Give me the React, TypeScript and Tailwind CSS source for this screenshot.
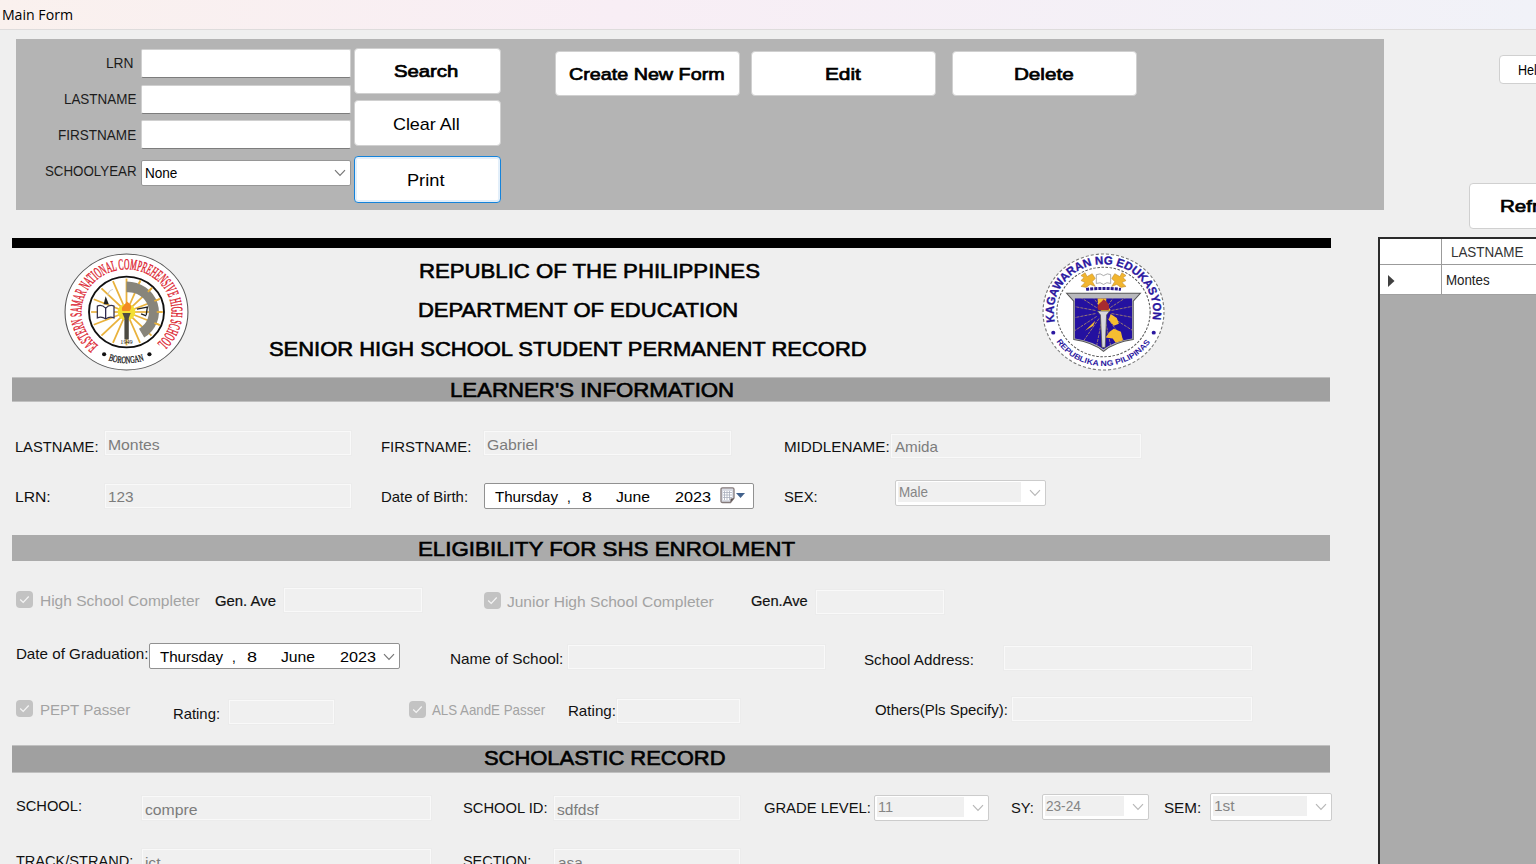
import { useLayoutEffect, useRef } from 'react';
import type { ReactNode } from 'react';

/** Text stretched or condensed horizontally to fill the width of its box. */
function Fit({ className, children }: { className: string; children: ReactNode }) {
  const box = useRef<HTMLDivElement>(null);
  const text = useRef<HTMLSpanElement>(null);
  useLayoutEffect(() => {
    if (!box.current || !text.current) return;
    const natural = text.current.offsetWidth;
    if (natural > 0) text.current.style.transform = `translateX(0.9px) scaleX(${(box.current.clientWidth - 1.4) / natural})`;
  });
  return (
    <div ref={box} className={`shrink-0 h-5 text-left text-[15px] leading-5 ${className}`}>
      <span ref={text} className="inline-block origin-left whitespace-pre">
        {children}
      </span>
    </div>
  );
}

function Field({ className, children }: { className: string; children?: ReactNode }) {
  return (
    <div className={`flex h-6 shrink-0 border border-[#f9f9f9] bg-[#f0f0f0] pl-px text-[#7c7c7c] outline outline-[#ececec] ${className}`}>
      {children}
    </div>
  );
}

function Chevron({ className }: { className: string }) {
  return (
    <svg className={`shrink-0 ${className}`} width="12" height="8" viewBox="0 0 12 8" fill="none" stroke="currentColor" strokeWidth="1.2">
      <path d="M1 1.2 6 6.4 11 1.2" />
    </svg>
  );
}

function Select({ className, children }: { className: string; children: ReactNode }) {
  return (
    <div className={`flex shrink-0 items-center rounded-[2px] border border-[#cccccc] bg-white text-[#858585] ${className}`}>
      <div className="mb-0.5 ml-0.5 mr-2 h-5 flex-1 bg-[#f0f0f0]">{children}</div>
      <Chevron className="mr-1 text-[#b8b8b8]" />
    </div>
  );
}

function Check({ className }: { className: string }) {
  return (
    <div className={`flex size-[17px] shrink-0 items-center justify-center rounded-[4px] bg-[#c3c3c3] ${className}`}>
      <svg width="11" height="9" viewBox="0 0 11 9" fill="none" stroke="#f5f5f5" strokeWidth="1.2">
        <path d="m1.2 4.5 3 3 5.5-6" />
      </svg>
    </div>
  );
}

function DatePicker({ className, children }: { className: string; children: ReactNode }) {
  return (
    <div className={`flex h-[26px] shrink-0 rounded-[2px] border border-[#919191] bg-white text-black ${className}`}>
      <Fit className="ml-[9px] mt-[3px] w-[65px]">Thursday</Fit>
      <Fit className="ml-[7px] mt-[3px] w-[5px]">,</Fit>
      <Fit className="ml-[10px] mt-[3px] w-[11px]">8</Fit>
      <Fit className="ml-[23px] mt-[3px] w-[36px]">June</Fit>
      <Fit className="ml-[23px] mt-[3px] w-[37px]">2023</Fit>
      {children}
    </div>
  );
}

function Button({ className, focused, children }: { className: string; focused?: boolean; children: ReactNode }) {
  const frame = focused
    ? 'border-[1.5px] border-[#1583da] shadow-[inset_0_0_0_2px_#e3effa]'
    : 'border border-[#d0d0d0]';
  return (
    <button className={`flex shrink-0 items-center justify-center rounded-[4px] bg-white text-black ${frame} ${className}`}>
      {children}
    </button>
  );
}

const rays = [0, 22.5, 45, 67.5, 90, 112.5, 135, 157.5, 180, 202.5, 225, 247.5, 270, 292.5, 315, 337.5];

function SchoolSeal({ className }: { className: string }) {
  return (
    <svg className={className} width="125" height="118" viewBox="-60 -60 120 120" preserveAspectRatio="none">
      <defs>
        <path id="schoolTop" d="M-27 34A43.4 43.4 0 1 1 27 34" />
        <path id="schoolBottom" d="M-17.5 49A52 52 0 0 0 17.5 49" />
      </defs>
      <circle r="59" fill="#fff" stroke="#555" strokeWidth="1" />
      <circle r="36" fill="#fff" stroke="#111" strokeWidth="1.8" />
      <g stroke="#e9b23c" strokeWidth="1.7">
        {rays.map((a) => (
          <path key={a} d="M0-8V-34" transform={`rotate(${a})`} />
        ))}
      </g>
      <path d="M0-31V-20A20 20 0 0 1 12 17L17 26A31 31 0 0 0 0-31Z" fill="#88857b" />
      <g stroke="#e9b23c" strokeWidth="1.7">
        <path d="M0-31V-35" transform="rotate(22.5)" />
        <path d="M0-29V-35" transform="rotate(45)" />
        <path d="M0-29V-35" transform="rotate(67.5)" />
        <path d="M0-29V-35" transform="rotate(90)" />
        <path d="M0-29V-35" transform="rotate(112.5)" />
      </g>
      <circle r="8.5" fill="#f3df32" />
      <path d="M-4-1C-6-7 0-7 0-11 6-7 5-4 3-1Z" fill="#f38b24" />
      <path d="M-4 1H4L2.2 6V28H-2V6Z" fill="#4c4a42" />
      <path d="M-28-6Q-24-8-20-4 -16-8-12-6V6Q-16 4-20 7 -24 4-28 6Z" fill="#fff" stroke="#332f48" strokeWidth="1.2" />
      <path d="M-20-4V7" fill="none" stroke="#272248" strokeWidth="1.2" />
      <path d="M-22-8-20-16-17-8Z" fill="#222" />
      <path d="M-18-17Q-17-22-13-23" fill="none" stroke="#ccc" />
      <path d="M10-3 20-5 19 3M14 2 19 4" fill="none" stroke="#222" strokeWidth="1.3" />
      <text fill="#dc2430" stroke="#dc2430" strokeWidth="0.45" fontFamily="Liberation Serif, serif" fontSize="15.5">
        <textPath href="#schoolTop" textLength="211" lengthAdjust="spacingAndGlyphs">
          EASTERN SAMAR NATIONAL COMPREHENSIVE HIGH SCHOOL
        </textPath>
      </text>
      <text fill="#111" stroke="#111" strokeWidth="0.3" fontFamily="Liberation Serif, serif" fontSize="10">
        <textPath href="#schoolBottom" textLength="35" lengthAdjust="spacingAndGlyphs">
          BORONGAN
        </textPath>
      </text>
      <circle cx="-21.5" cy="43" r="2" fill="#111" />
      <circle cx="22" cy="43" r="2" fill="#111" />
      <text x="-6" y="33" fill="#111" fontFamily="Liberation Serif, serif" fontSize="6" textLength="12">
        1949
      </text>
    </svg>
  );
}

function DepartmentSeal({ className }: { className: string }) {
  return (
    <svg className={className} width="123" height="118" viewBox="-60 -60 120 120" preserveAspectRatio="none">
      <defs>
        <path id="deptTop" d="M-47.3 10A48.4 48.4 0 1 1 47.3 10" />
        <path id="deptBottom" d="M-46 30A55 55 0 0 0 46 30" />
        <clipPath id="shield">
          <path d="M-28-14H28V27Q10 30 0 38Q-10 30-28 27Z" />
        </clipPath>
      </defs>
      <circle r="59" fill="#fff" stroke="#777" strokeWidth="1.1" strokeDasharray="3 2" />
      <circle r="45.5" fill="#fff" stroke="#555" strokeWidth="1" strokeDasharray="2.5 1.5" />
      <path d="M-36-19H36L29-11V28Q10 31 0 40Q-10 31-29 28V-11Z" fill="#b9b9bd" stroke="#555" strokeWidth="1" />
      <g clipPath="url(#shield)">
        <rect x="-36" y="-20" width="72" height="62" fill="#2411a0" />
        <g stroke="#b79569" strokeWidth="0.7" strokeDasharray="3 1">
          {rays.map((a) => (
            <path key={a} d="M0-8V-46" transform={`rotate(${a + 11})`} />
          ))}
        </g>
        <path d="M-6-16 2-17 3-7 7-2 2 3-5-4Z M7 2 13 6 15 12 10 14 5 8Z M10 17 17 20 19 29 13 33 9 27 2 26 6 20Z M-18 19-8 9-10 14Z" fill="#f5bd31" />
      </g>
      <path d="M-5-2C-8-8-2-9 0-13 6-9 6-5 5-2Z" fill="#a72b2f" />
      <path d="M-6-1H6L3 3 1.7 36H-1.5L-3 3Z" fill="#d8d8dc" stroke="#554" strokeWidth="0.7" />
      <path d="M-7-38Q-3-40 0-37 4-40 7-38V-29Q3-31 0-28-3-31-7-29Z" fill="#fff" stroke="#777" strokeWidth="0.6" />
      <g fill="#f1b52f" stroke="#b6852b" strokeWidth="0.5">
        <path d="M-22-37-18-40-16-36-11-39-8-34-11-31-8-26-13-28-17-25-22-26-18-30-22-32-19-35Z" />
        <path d="M22-37 18-40 16-36 11-39 8-34 11-31 8-26 13-28 17-25 22-26 18-30 22-32 19-35Z" />
      </g>
      <path d="M-17-23Q0-25 17-23" fill="none" stroke="#2b1b91" strokeWidth="3" strokeDasharray="3 1" />
      <g fill="#2b18a0" fontFamily="Liberation Sans, sans-serif" fontWeight="700">
        <text fontSize="11.5" stroke="#2b18a0" strokeWidth="0.3">
          <textPath href="#deptTop" textLength="170" lengthAdjust="spacingAndGlyphs">
            KAGAWARAN NG EDUKASYON
          </textPath>
        </text>
        <text fontSize="7.8">
          <textPath href="#deptBottom" textLength="108" lengthAdjust="spacingAndGlyphs">
            REPUBLIKA NG PILIPINAS
          </textPath>
        </text>
        <circle cx="-49" cy="21" r="2" />
        <circle cx="49" cy="21" r="2" />
      </g>
    </svg>
  );
}

const heading = 'text-[20px] text-black [-webkit-text-stroke:0.6px_#000]';
const strong = 'text-[17px] [-webkit-text-stroke:0.7px_#000]';
const searchInput = 'w-[210px] shrink-0 border border-b-[#7d7d7d] border-x-[#d0d0d0] border-t-[#d0d0d0] bg-white rounded-[2px]';

function SearchPanel() {
  return (
    <section className="ml-4 mt-[9px] flex h-[171px] w-[1368px] shrink-0 bg-[#b4b4b4] text-[#1c1c1c]">
      <div className="w-[335px] shrink-0 pt-[10px]">
        <div className="flex h-[29px]">
          <Fit className="ml-[89px] mr-[7px] mt-[4px] w-[29px]">LRN</Fit>
          <div className={searchInput} />
        </div>
        <div className="mt-[7px] flex h-[29px]">
          <Fit className="ml-[47px] mr-[4px] mt-[4px] w-[74px]">LASTNAME</Fit>
          <div className={searchInput} />
        </div>
        <div className="mt-[6px] flex h-[29px]">
          <Fit className="ml-[41px] mr-[4px] mt-[5px] w-[80px]">FIRSTNAME</Fit>
          <div className={searchInput} />
        </div>
        <div className="mt-[11px] flex h-[27px]">
          <Fit className="ml-[28px] mr-[4px] mt-px w-[93px]">SCHOOLYEAR</Fit>
          <div className="flex h-[26px] w-[210px] shrink-0 items-center justify-between rounded-[2px] border border-[#969696] bg-white">
            <Fit className="ml-[2px] w-[34px] text-black">None</Fit>
            <Chevron className="mr-1 text-[#777]" />
          </div>
        </div>
      </div>
      <div className="ml-[3px] w-[147px] shrink-0 pt-[9px]">
        <Button className="h-[46px] w-full pr-1 pt-[2px]">
          <Fit className={`w-[66px] ${strong}`}>Search</Fit>
        </Button>
        <Button className="mt-[6px] h-[46px] w-full pr-[3px] pt-[3px]">
          <Fit className="w-[68px] text-[17px]">Clear All</Fit>
        </Button>
        <Button focused className="mt-[10px] h-[47px] w-full pr-1 pt-[3px]">
          <Fit className="w-[39px] text-[17px]">Print</Fit>
        </Button>
      </div>
      <div className="ml-[54px] flex pt-[12px]">
        <Button className="h-[45px] w-[185px] pr-0.5">
          <Fit className={`mt-0.5 w-[157px] ${strong}`}>Create New Form</Fit>
        </Button>
        <Button className="ml-[11px] h-[45px] w-[185px] pr-0.5">
          <Fit className={`mt-0.5 w-[37px] ${strong}`}>Edit</Fit>
        </Button>
        <Button className="ml-[16px] h-[45px] w-[185px] pr-[3px]">
          <Fit className={`mt-0.5 w-[61px] ${strong}`}>Delete</Fit>
        </Button>
      </div>
    </section>
  );
}

function StudentRecord() {
  return (
    <main className="w-[1366px] shrink-0 pt-px text-[#111]">
      <div className="h-[10px] w-[1319px] bg-black" />
      <header className="flex h-[129px] pt-[5px]">
        <SchoolSeal className="ml-[52px] shrink-0" />
        <div className="ml-[79px] w-[600px] shrink-0 pt-[8px]">
          <Fit className={`ml-[150px] w-[343px] ${heading}`}>REPUBLIC OF THE PHILIPPINES</Fit>
          <Fit className={`ml-[149px] mt-[19px] w-[322px] ${heading}`}>DEPARTMENT OF EDUCATION</Fit>
          <Fit className={`mt-[19px] w-[599px] ${heading}`}>SENIOR HIGH SCHOOL STUDENT PERMANENT RECORD</Fit>
        </div>
        <DepartmentSeal className="ml-[174px] shrink-0" />
      </header>
      <div className="flex h-[25px] w-[1318px] border-y border-[#c0c0c0] bg-[#a0a0a0]">
        <Fit className={`ml-[437px] mt-[2px] w-[286px] ${heading}`}>LEARNER'S INFORMATION</Fit>
      </div>
      <div className="flex h-[68px] items-start">
        <Fit className="ml-[2px] mt-[35px] w-[85px]">LASTNAME:</Fit>
        <Field className="ml-[6px] mt-[29px] w-[246px]">
          <Fit className="mt-[3px] w-[53px]">Montes</Fit>
        </Field>
        <Fit className="ml-[29px] mt-[35px] w-[92px]">FIRSTNAME:</Fit>
        <Field className="ml-[12px] mt-[29px] w-[247px]">
          <Fit className="mt-[3px] w-[52px]">Gabriel</Fit>
        </Field>
        <Fit className="ml-[52px] mt-[35px] w-[107px]">MIDDLENAME:</Fit>
        <Field className="ml-px mt-[32px] w-[250px]">
          <Fit className="ml-px mt-[2px] w-[45px]">Amida</Fit>
        </Field>
      </div>
      <div className="flex h-[65px] items-start">
        <Fit className="ml-[2px] mt-[17px] w-[37px]">LRN:</Fit>
        <Field className="ml-[54px] mt-[14px] w-[246px]">
          <Fit className="mt-[2px] w-[27px]">123</Fit>
        </Field>
        <Fit className="ml-[29px] mt-[17px] w-[89px]">Date of Birth:</Fit>
        <DatePicker className="ml-[15px] mt-[13px] w-[270px]">
          <svg className="ml-[9px] mt-[3px] shrink-0" width="27" height="17" viewBox="0 0 27 17">
            <path d="M2.5.8H12.5Q14 .8 14 2.3V11L10.5 15.5H2.5Q1 15.5 1 14V2.3Q1 .8 2.5.8Z" fill="#d9dbe3" stroke="#857b7b" strokeWidth="1.3" />
            <path d="M3 4H12V11L10 13H3Z" fill="#fff" />
            <path d="M3 5.5H12M3 8H12M3 10.5H12M4.5 4V13M7 4V13M9.5 4V13" stroke="#a9aebd" strokeWidth="0.8" />
            <path d="M10.5 15V11.5H14Z" fill="#5c5252" />
            <path d="M16 6H25L20.5 11Z" fill="#42618c" />
          </svg>
        </DatePicker>
        <Fit className="ml-[29px] mt-[17px] w-[35px]">SEX:</Fit>
        <Select className="ml-[77px] mt-[10px] h-[26px] w-[151px]">
          <Fit className="w-[31px]">Male</Fit>
        </Select>
      </div>
      <div className="flex h-[26px] w-[1318px] bg-[#ababab]">
        <Fit className={`ml-[405px] mt-[4px] w-[378px] ${heading}`}>ELIGIBILITY FOR SHS ENROLMENT</Fit>
      </div>
      <div className="flex h-[66px] items-start">
        <Check className="ml-[4px] mt-[30px]" />
        <Fit className="ml-[6px] mt-[30px] w-[161px] text-[#a3a3a3]">High School Completer</Fit>
        <Fit className="ml-[14px] mt-[30px] w-[62px] [-webkit-text-stroke:0.2px]">Gen. Ave</Fit>
        <Field className="ml-[8px] mt-[27px] w-[138px]" />
        <Check className="ml-[62px] mt-[31px]" />
        <Fit className="ml-[5px] mt-[31px] w-[208px] text-[#a3a3a3]">Junior High School Completer</Fit>
        <Fit className="ml-[36px] mt-[30px] w-[58px] [-webkit-text-stroke:0.2px]">Gen.Ave</Fit>
        <Field className="ml-[8px] mt-[29px] w-[128px]" />
      </div>
      <div className="flex h-[58px] items-start">
        <Fit className="ml-[3px] mt-[17px] w-[134px]">Date of Graduation:</Fit>
        <DatePicker className="mt-[16px] w-[251px]">
          <Chevron className="ml-[7px] mt-[9px] text-[#777]" />
        </DatePicker>
        <Fit className="ml-[49px] mt-[22px] w-[115px]">Name of School:</Fit>
        <Field className="ml-[4px] mt-[18px] w-[257px]" />
        <Fit className="ml-[38px] mt-[23px] w-[111px]">School Address:</Fit>
        <Field className="ml-[30px] mt-[19px] w-[248px]" />
      </div>
      <div className="flex h-[60px] items-start">
        <Check className="ml-[4px] mt-[15px]" />
        <Fit className="ml-[6px] mt-[15px] w-[92px] text-[#a3a3a3]">PEPT Passer</Fit>
        <Fit className="ml-[41px] mt-[19px] w-[49px]">Rating:</Fit>
        <Field className="ml-[8px] mt-[15px] w-[105px]" />
        <Check className="ml-[75px] mt-[16px]" />
        <Fit className="ml-[5px] mt-[15px] w-[115px] text-[#a3a3a3]">ALS AandE Passer</Fit>
        <Fit className="ml-[21px] mt-[16px] w-[50px]">Rating:</Fit>
        <Field className="mt-[14px] w-[123px]" />
        <Fit className="ml-[134px] mt-[15px] w-[134px]">Others(Pls Specify):</Fit>
        <Field className="ml-[4px] mt-[12px] w-[240px]" />
      </div>
      <div className="flex h-[28px] w-[1318px] border-y border-[#c0c0c0] bg-[#a0a0a0]">
        <Fit className={`ml-[471px] mt-[2px] w-[243px] ${heading}`}>SCHOLASTIC RECORD</Fit>
      </div>
      <div className="flex h-[62px] items-start">
        <Fit className="ml-[3px] mt-[23px] w-[68px]">SCHOOL:</Fit>
        <Field className="ml-[59px] mt-[23px] w-[289px]">
          <Fit className="mt-[3px] w-[54px]">compre</Fit>
        </Field>
        <Fit className="ml-[31px] mt-[25px] w-[86px]">SCHOOL ID:</Fit>
        <Field className="ml-[6px] mt-[23px] w-[186px]">
          <Fit className="mt-[3px] w-[43px]">sdfdsf</Fit>
        </Field>
        <Fit className="ml-[23px] mt-[25px] w-[108px]">GRADE LEVEL:</Fit>
        <Select className="ml-[3px] mt-[22px] h-[26px] w-[115px]">
          <Fit className="w-[17px]">11</Fit>
        </Select>
        <Fit className="ml-[21px] mt-[25px] w-[24px]">SY:</Fit>
        <Select className="ml-[8px] mt-[21px] h-[26px] w-[107px]">
          <Fit className="w-[36px]">23-24</Fit>
        </Select>
        <Fit className="ml-[14px] mt-[25px] w-[39px]">SEM:</Fit>
        <Select className="ml-[8px] mt-[20px] h-[28px] w-[122px]">
          <Fit className="w-[22px]">1st</Fit>
        </Select>
      </div>
      <div className="flex h-[29px] items-start">
        <Fit className="ml-[3px] mt-[16px] w-[119px]">TRACK/STRAND:</Fit>
        <Field className="ml-[8px] mt-[14px] w-[289px]">
          <Fit className="mt-[3px] w-[17px]">ict</Fit>
        </Field>
        <Fit className="ml-[31px] mt-[16px] w-[70px]">SECTION:</Fit>
        <Field className="ml-[22px] mt-[14px] w-[186px]">
          <Fit className="ml-px mt-[3px] w-[26px]">asa</Fit>
        </Field>
      </div>
    </main>
  );
}

function ResultsGrid() {
  return (
    <aside className="h-[627px] flex-1 overflow-hidden border-l-2 border-t-2 border-[#2b2b2b] bg-[#ababab] text-[#333]">
      <div className="flex h-[26px] border-b border-[#9b9b9b] bg-white">
        <div className="w-[62px] shrink-0 border-r border-[#9b9b9b]" />
        <Fit className="ml-[8px] mt-[3px] w-[74px]">LASTNAME</Fit>
      </div>
      <div className="flex h-[30px] border-b border-[#a0a0a0] bg-white">
        <div className="w-[62px] shrink-0 border-r border-[#9b9b9b] pl-[7px] pt-[10px]">
          <svg width="8" height="12" viewBox="0 0 8 12">
            <path d="M1 0 7.5 6 1 12Z" fill="#404040" />
          </svg>
        </div>
        <Fit className="ml-[3px] mt-[5px] w-[45px] text-[#222]">Montes</Fit>
      </div>
    </aside>
  );
}

export default function App() {
  return (
    <div className="flex h-[864px] w-[1536px] flex-col overflow-hidden bg-[#efefef] font-['Liberation_Sans',Arial,sans-serif]">
      <div className="flex h-[30px] shrink-0 border-b border-[#dedcdc] bg-linear-to-r from-[#faf1ee] via-[#f8eef5] via-40% to-[#f1f2f8]">
        <Fit className="ml-px mt-[4px] w-[73px] font-['Open_Sans',sans-serif] text-[14px] text-black">Main Form</Fit>
      </div>
      <div className="flex h-[207px] shrink-0">
        <SearchPanel />
        <div className="ml-[85px] shrink-0">
          <Button className="ml-[30px] mt-[25px] h-[29px] w-[75px] pr-[5px]">
            <Fit className="w-[34px] text-[14px]">Help?</Fit>
          </Button>
          <Button className="mt-[99px] h-[46px] w-[134px] pt-[2px]">
            <Fit className={`w-[74px] ${strong}`}>Refresh</Fit>
          </Button>
        </div>
      </div>
      <div className="flex h-[627px] shrink-0 pl-3">
        <StudentRecord />
        <ResultsGrid />
      </div>
    </div>
  );
}
